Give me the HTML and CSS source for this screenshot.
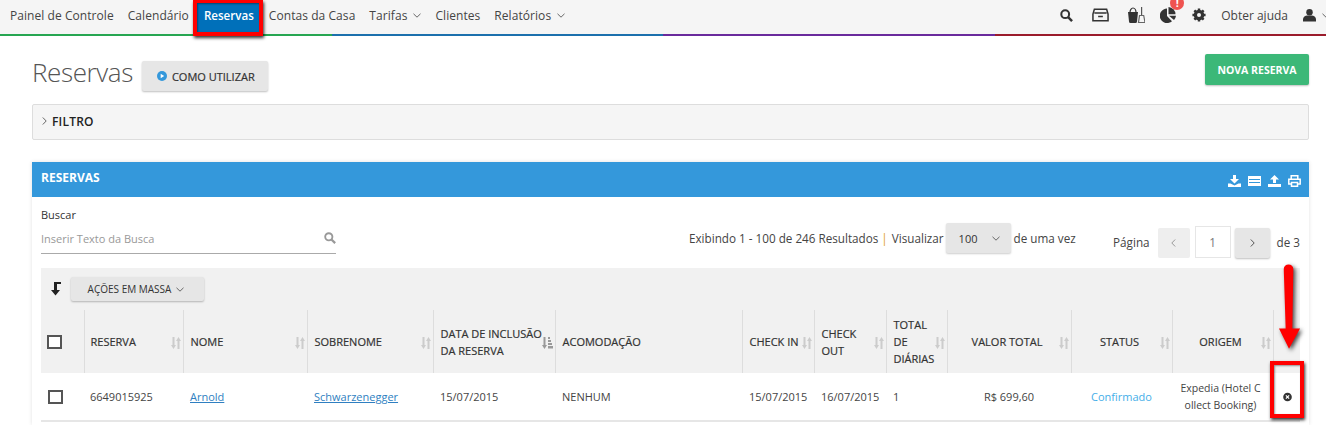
FILE: index.html
```html
<!DOCTYPE html>
<html lang="pt-BR">
<head>
    <meta charset="UTF-8">
    <title>Reservas</title>
    <link rel="stylesheet" href="styles.css">
</head>
<body>
    <svg class="defs">
        <symbol id="sort" viewBox="0 0 10 12"><path d="M1.500 0h2v8H5l-2.500 4L0 8h1.500zM6.500 12h2V4H10L7.500 0 5 4h1.500z"/></symbol>
        <symbol id="sort-on" viewBox="0 0 11 12"><path d="M1.500 0h2v8H5l-2.500 4L0 8h1.500zM6 0h2v2H6zM6 3h3v2H6zM6 6h4v2H6zM6 9h5v2.500H6z"/></symbol>
    </svg>

    <!-- Menu -->
    <nav class="topbar">
        <a class="nav-item">Painel de Controle</a>
        <a class="nav-item">Calendário</a>
        <a class="nav-item active">Reservas</a>
        <a class="nav-item">Contas da Casa</a>
        <a class="nav-item">Tarifas <svg class="chev" viewBox="0 0 8 5"><path d="M.5.8 4 4.2 7.5.8" /></svg></a>
        <a class="nav-item">Clientes</a>
        <a class="nav-item">Relatórios <svg class="chev" viewBox="0 0 8 5"><path d="M.5.8 4 4.2 7.5.8" /></svg></a>
        <div class="nav-right">
            <svg class="ico ico-search" viewBox="0 0 14 14"><circle cx="5.600" cy="5.600" r="4.200" fill="none" stroke="#333" stroke-width="2.200"/><path d="M8.700 8.700 13 13" stroke="#333" stroke-width="2.600"/></svg>
            <svg class="ico ico-box" viewBox="0 0 18 14"><path d="M2.500 1h13L17 6v7H1V6zM2.500 5h13M6.500 8.500h5" fill="none" stroke="#333" stroke-width="1.600"/></svg>
            <svg class="ico ico-clean" viewBox="0 0 17 16"><path d="M0 5h10l-1 9.500a1.500 1.500 0 0 1-1.500 1.500h-5A1.500 1.500 0 0 1 1 14.500z" fill="#333"/><path d="M2 5.500a3 4.500 0 0 1 6 0" fill="none" stroke="#333" stroke-width="1.200"/><path d="M13 0h1.200v8H13z" fill="#555"/><path d="M11.500 8.500h4.200L17 15.500h-6.500z" fill="none" stroke="#666" stroke-width="1.200"/></svg>
            <span class="chart-wrap">
                <svg class="ico ico-chart" viewBox="0 0 16 16"><path d="M7 1.500V9l5 5.200A7.300 7.300 0 1 1 7 1.500z" fill="#333"/><path d="M8.500 0a7.500 7.500 0 0 1 7 7.200h-7z" fill="#333"/><path d="M9 8.800h7a7.500 7.500 0 0 1-2 4.300z" fill="#333"/></svg>
                <span class="alert-badge">!</span>
            </span>
            <svg class="ico ico-gear" viewBox="0 0 16 16"><circle cx="8" cy="8" r="4.500" fill="none" stroke="#333" stroke-width="3"/><path d="M8 .5v15M.5 8h15M2.700 2.700l10.600 10.600M13.300 2.700 2.700 13.300" stroke="#333" stroke-width="2.800"/><circle cx="8" cy="8" r="2.300" fill="#f5f5f5"/></svg>
            <span class="help">Obter ajuda</span>
            <svg class="ico ico-user" viewBox="0 0 14 14"><circle cx="7" cy="4" r="3.500" fill="#333"/><path d="M0 14v-2.500C0 9 2.500 7.500 4.500 7.500h5C11.500 7.500 14 9 14 11.500V14z" fill="#333"/></svg>
            <svg class="chev chev-user" viewBox="0 0 8 5"><path d="M.5.8 4 4.200 7.500.8" /></svg>
        </div>
    </nav>
    <div class="colorline"><i class="c1"></i><i class="c2"></i><i class="c3"></i><i class="c4"></i></div>

    <main class="content">
        <div class="page-head">
            <h1>Reservas</h1>
            <button class="btn-help"><svg viewBox="0 0 10 10"><circle cx="5" cy="5" r="5" fill="#3498db"/><path d="M3.700 2.800 7.200 5 3.700 7.200z" fill="#fff"/></svg>COMO UTILIZAR</button>
            <button class="btn-new">NOVA RESERVA</button>
        </div>

        <div class="filter"><svg viewBox="0 0 5 8"><path d="M.8.500 4.200 4 .8 7.500" /></svg>FILTRO</div>

        <section class="panel">
            <header class="panel-head">
                <span>RESERVAS</span>
                <div class="panel-tools">
                    <svg viewBox="0 0 13 12"><path d="M5 0h3v4h3L6.500 8.500 2 4h3zM0 8.500h2.500l4 2 4-2H13V12H0z" fill="#fff"/></svg>
                    <svg viewBox="0 0 13 12"><path d="M0 1h13v10H0zM1 4v1h11V4zM1 7v1h11V7z" fill="#fff" fill-rule="evenodd"/></svg>
                    <svg viewBox="0 0 13 12"><path d="M5 8h3V4.500h3L6.500 0 2 4.500h3zM0 9h13v3H0z" fill="#fff"/></svg>
                    <svg viewBox="0 0 13 12"><path d="M3.200 4V.8h6.600V4M3 9H.8V4.300h11.400V9H10M3.500 7.500h6v3.700h-6z" fill="none" stroke="#fff" stroke-width="1.500"/></svg>
                </div>
            </header>
            <div class="panel-body">
                <div class="tools-row">
                    <div class="search-box">
                        <label>Buscar</label>
                        <div class="search-input">
                            <span>Inserir Texto da Busca</span>
                            <svg viewBox="0 0 14 14"><circle cx="5.600" cy="5.600" r="4.200" fill="none" stroke="#999" stroke-width="2.200"/><path d="M8.700 8.700 13 13" stroke="#999" stroke-width="2.600"/></svg>
                        </div>
                    </div>
                    <div class="results">
                        <span>Exibindo 1 - 100 de 246 Resultados</span>
                        <em>|</em>
                        <span>Visualizar</span>
                        <span class="select">100 <svg class="chev" viewBox="0 0 8 5"><path d="M.5.8 4 4.200 7.500.8" /></svg></span>
                        <span>de uma vez</span>
                    </div>
                    <div class="pager">
                        <span>Página</span>
                        <span class="pg pg-off"><svg viewBox="0 0 5 8"><path d="M4.200.5.800 4l3.400 3.500" /></svg></span>
                        <span class="pg-num">1</span>
                        <span class="pg pg-on"><svg viewBox="0 0 5 8"><path d="M.8.500 4.200 4 .8 7.500" /></svg></span>
                        <span>de 3</span>
                    </div>
                </div>

                <div class="mass-row">
                    <svg class="mass-arrow" viewBox="0 0 10 14"><path d="M3 0h7v2H6v6h3l-4.500 5.500L0 8h3z" fill="#222"/></svg>
                    <button class="btn-mass">AÇÕES EM MASSA <svg class="chev" viewBox="0 0 8 5"><path d="M.5.8 4 4.200 7.500.8" /></svg></button>
                </div>
                <table class="grid">
                    <colgroup>
                        <col class="w-check"><col class="w-res"><col class="w-name"><col class="w-sur"><col class="w-date">
                        <col class="w-room"><col class="w-in"><col class="w-out"><col class="w-days"><col class="w-total">
                        <col class="w-status"><col class="w-origin"><col class="w-act">
                    </colgroup>
                    <thead>
                        <tr>
                            <th class="first"><span class="check"></span></th>
                            <th>RESERVA<svg class="sort"><use href="#sort"/></svg></th>
                            <th>NOME<svg class="sort"><use href="#sort"/></svg></th>
                            <th>SOBRENOME<svg class="sort"><use href="#sort"/></svg></th>
                            <th>DATA DE INCLUSÃO DA RESERVA<svg class="sort sort-on"><use href="#sort-on"/></svg></th>
                            <th>ACOMODAÇÃO</th>
                            <th>CHECK IN<svg class="sort"><use href="#sort"/></svg></th>
                            <th>CHECK OUT<svg class="sort"><use href="#sort"/></svg></th>
                            <th>TOTAL DE DIÁRIAS<svg class="sort"><use href="#sort"/></svg></th>
                            <th class="center">VALOR TOTAL<svg class="sort"><use href="#sort"/></svg></th>
                            <th class="center">STATUS<svg class="sort"><use href="#sort"/></svg></th>
                            <th class="center">ORIGEM<svg class="sort"><use href="#sort"/></svg></th>
                            <th></th>
                        </tr>
                    </thead>
                    <tbody>
                        <tr>
                            <td class="first"><span class="check"></span></td>
                            <td>6649015925</td>
                            <td><a class="link">Arnold</a></td>
                            <td><a class="link">Schwarzenegger</a></td>
                            <td>15/07/2015</td>
                            <td>NENHUM</td>
                            <td>15/07/2015</td>
                            <td>16/07/2015</td>
                            <td>1</td>
                            <td class="center">R$ 699,60</td>
                            <td class="center status">Confirmado</td>
                            <td class="center origin">Expedia (Hotel C<br>ollect Booking)</td>
                            <td class="act"><svg viewBox="0 0 10 10"><circle cx="5" cy="5" r="4.800" fill="#333"/><path d="M3.200 3.200l3.600 3.600M6.800 3.200 3.200 6.800" stroke="#fff" stroke-width="1.400"/></svg></td>
                        </tr>
                    </tbody>
                </table>
            </div>
        </section>
    </main>

    <!-- Marcacoes vermelhas -->
    <span class="mark mark-nav"></span>
    <span class="mark mark-act"></span>
    <svg class="mark-arrow" viewBox="0 0 24 90"><path d="M6 5a5 5 0 0 1 10 0l-1 62h8L11.500 88 1 67h7z" fill="#f00"/></svg>
</body>
</html>
```

FILE: styles.css
```css
/* Geral */
body { margin: 0; font-family: "Open Sans", sans-serif; font-size: 12px; color: #444; background: #fff; height: 425px; overflow: hidden; position: relative; }
button { font-family: inherit; border: none; cursor: pointer; }
svg { display: block; }
.defs { position: absolute; width: 0; height: 0; }
.chev { display: inline-block; flex: none; width: 8px; height: 5px; fill: none; stroke: #666; stroke-width: 1; }

/* Menu */
.topbar { display: flex; align-items: stretch; height: 34px; padding-left: 3px; background: #f5f5f5; }
.nav-item { display: flex; align-items: center; gap: 6px; padding: 0 7px 4px; color: #444; font-size: 12px; letter-spacing: .06px; }
.nav-item.active { padding: 0 8px 4px; color: #fff; font-size: 11.600px; font-weight: 600; letter-spacing: 0; background: #0070ba; }
.nav-right { display: flex; align-items: center; margin-left: auto; padding-bottom: 4px; color: #444; }
.ico { flex: none; }
.ico-search { width: 13px; height: 13px; margin-right: 19px; }
.ico-box { width: 17px; height: 14px; margin-right: 19px; }
.ico-clean { width: 17px; height: 16px; margin-right: 15px; }
.chart-wrap { position: relative; margin-right: 16px; }
.ico-chart { width: 16px; height: 16px; }
.alert-badge { position: absolute; left: 10px; top: -11px; width: 14px; height: 14px; border-radius: 50%; background: #ef5350; color: #fff; font-size: 11px; font-weight: 700; line-height: 14px; text-align: center; }
.ico-gear { width: 14px; height: 14px; margin-right: 15px; }
.help { margin-right: 15px; }
.ico-user { width: 13px; height: 14px; margin-right: 6px; }
.chev-user { margin-right: -4px; }
.colorline { display: flex; height: 2px; }
.colorline i { flex: 1; }
.c1 { background: #27a652; }
.c2 { background: #1c70ad; }
.c3 { background: #6a2a9c; }
.c4 { background: #9b1c2c; }

/* Conteudo */
.content { padding: 0 17px 0 32px; }
.page-head { display: flex; align-items: flex-start; height: 68px; }
.page-head h1 { margin: 18px 9px 0 0; font-size: 26px; line-height: 36px; font-weight: 300; color: #555; letter-spacing: -.4px; }
.btn-help { display: flex; align-items: center; gap: 5px; height: 30px; margin-top: 25px; padding: 0 13px 0 15px; background: #e6e6e6; color: #333; font-size: 11px; font-weight: 500; -webkit-text-stroke: .2px #333; border-radius: 2px; box-shadow: 0 1px 2px rgba(0,0,0,.25); }
.btn-help svg { width: 10px; height: 10px; }
.btn-new { margin-left: auto; margin-top: 18px; height: 31px; width: 104px; background: #3cb878; color: #fff; font-size: 10.500px; font-weight: 700; border-radius: 2px; box-shadow: 0 1px 2px rgba(0,0,0,.25); }
.filter { display: flex; align-items: center; gap: 5px; height: 32px; padding: 0 0 2px 9px; background: #f5f5f5; border: 1px solid #ddd; border-radius: 2px; color: #222; font-size: 12px; font-weight: 600; letter-spacing: .2px; }
.filter svg { width: 5px; height: 8px; fill: none; stroke: #666; }

/* Painel */
.panel { margin-top: 22px; box-shadow: 0 0 4px rgba(0,0,0,.12); }
.panel-head { display: flex; align-items: center; justify-content: space-between; height: 35px; padding: 0 8px 0 9px; background: #3498db; color: #fff; font-size: 12px; font-weight: 700; }
.panel-head span { margin-top: -4px; }
.panel-tools { display: flex; gap: 7px; margin-top: 2px; }
.panel-tools svg { width: 13px; height: 12px; }
.panel-body { padding: 0 9px; height: 228px; }
.tools-row { display: flex; align-items: flex-start; height: 71px; }
.search-box { flex: none; width: 295px; padding-top: 10px; }
.search-box label { display: block; font-size: 11px; line-height: 15px; color: #333; }
.search-input { display: flex; align-items: center; justify-content: space-between; height: 30px; padding-top: 1px; border-bottom: 1px solid #aaa; color: #999; font-size: 11px; }
.search-input svg { width: 12px; height: 12px; }
.results { display: flex; align-items: center; gap: 3px; margin-left: 353px; margin-top: 26px; height: 30px; font-size: 11.700px; color: #444; white-space: nowrap; }
.results em { margin: 0 1px 0 0; font-style: normal; color: #e0a030; }
.select { display: flex; align-items: center; justify-content: space-between; width: 65px; height: 30px; box-sizing: border-box; padding: 0 11px 0 13px; margin: 0 0 0 -1px; background: #e6e6e6; border-radius: 2px; box-shadow: 0 1px 2px rgba(0,0,0,.2); color: #333; font-size: 11px; }
.pager { display: flex; align-items: center; margin-left: auto; margin-top: 29px; height: 32px; font-size: 11.700px; color: #444; white-space: nowrap; }
.pg { display: flex; align-items: center; justify-content: center; width: 32px; height: 30px; margin-top: 2px; border-radius: 2px; background: #eee; }
.pg svg { width: 5px; height: 8px; fill: none; stroke: #999; }
.pg-off { margin-left: 8px; }
.pg-on { width: 35px; margin-right: 7px; background: #e6e6e6; box-shadow: 0 1px 2px rgba(0,0,0,.25); }
.pg-on svg { stroke: #555; }
.pg-num { width: 36px; height: 32px; line-height: 30px; margin: 0 4px 0 5px; text-align: center; border: 1px solid #e6e6e6; box-sizing: border-box; color: #777; }

/* Tabela */
.mass-row { display: flex; align-items: center; height: 42px; background: #f1f1f1; padding-left: 10px; }
.mass-arrow { flex: none; width: 10px; height: 14px; margin-right: 10px; }
.btn-mass { display: flex; align-items: center; gap: 5px; width: 133px; height: 24px; padding: 0 3px 0 0; justify-content: center; background: #e6e6e6; color: #333; font-size: 10px; font-weight: 400; border-radius: 2px; box-shadow: 0 1px 2px rgba(0,0,0,.25); }
.grid { width: 1259px; table-layout: fixed; border-collapse: collapse; }
.w-check { width: 43px; }
.w-res { width: 99px; }
.w-name { width: 124px; }
.w-sur { width: 126px; }
.w-date { width: 122px; }
.w-room { width: 187px; }
.w-in { width: 72px; }
.w-out { width: 72px; }
.w-days { width: 61px; }
.w-total { width: 124px; }
.w-status { width: 101px; }
.w-origin { width: 101px; }
.grid th { position: relative; height: 63px; padding: 0 11px 0 7px; box-sizing: border-box; background: #f1f1f1; border-left: 1px solid #ddd; color: #333; font-size: 11px; font-weight: 400; line-height: 17px; text-align: left; -webkit-text-stroke: .2px #333; }
.grid td { height: 48px; padding: 0 7px; box-sizing: border-box; border-bottom: 2px solid #e6e6e6; color: #444; font-size: 11px; line-height: 17px; }
.grid th:nth-child(2), .grid td:nth-child(2) { padding-left: 6px; }
.grid th.first { border-left: none; padding: 0 0 0 6px; }
.grid td.first { padding: 0 0 0 7px; }
.grid th.center { padding: 0 4px 0 0; text-align: center; }
.grid td.center { text-align: center; }
.grid td.status { color: #45aee8; }
.grid td.origin { font-size: 10.500px; padding: 0 4px 0 0; }
.grid td.act { padding: 0 0 0 10px; }
.grid td.act svg { width: 9px; height: 10px; }
.link { color: #2f7fc1; text-decoration: underline; }
.check { display: block; width: 11px; height: 10px; border: 2px solid #555; background: #fff; }
.sort { position: absolute; right: 2px; top: 27px; width: 10px; height: 12px; fill: #ccc; stroke: none; }
.sort-on { width: 11px; fill: #999; }

/* Marcacoes */
.mark { position: absolute; box-sizing: border-box; border: 4px solid #f00; box-shadow: 1px 2px 3px rgba(0,0,0,.8), inset 1px 1px 2px rgba(0,0,0,.4); }
.mark-nav { left: 193px; top: 0; width: 70px; height: 36px; border-top-width: 3px; }
.mark-act { left: 1270px; top: 361px; width: 34px; height: 57px; }
.mark-arrow { position: absolute; left: 1278px; top: 263px; width: 23px; height: 89px; filter: drop-shadow(2px 2px 2px rgba(0,0,0,.7)); }
```
